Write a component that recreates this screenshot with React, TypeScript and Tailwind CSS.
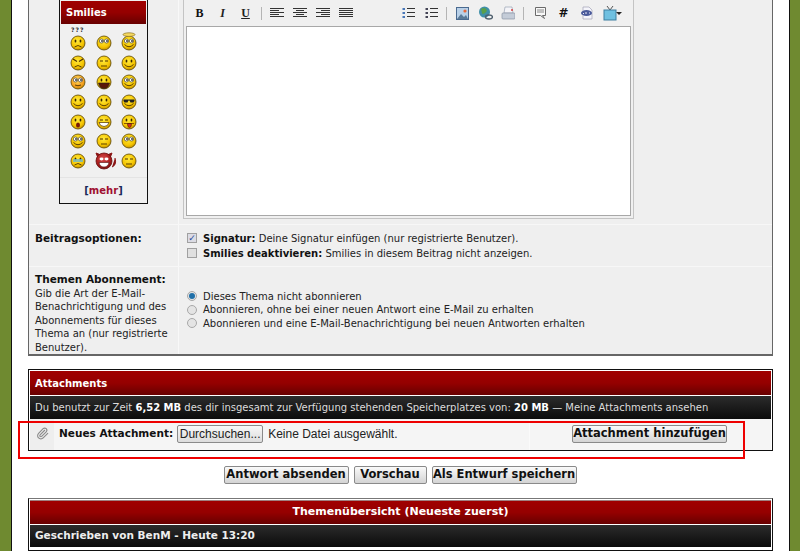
import React from "react";
import { Paperclip } from "lucide-react";

type Mood = "smile" | "sad" | "angry" | "flat" | "wink" | "open" | "laugh" | "shades" | "tongue" | "teeth" | "blush" | "huh" | "halo" | "cry" | "cool" | "devil";

function Smiley({ mood, id }: { mood: Mood; id: string }) {
  const devil = mood === "devil";
  const fillId = `f${id}`;
  return (
    <svg width="26" height="20" viewBox="0 0 26 20" className="overflow-visible">
      <defs>
        <radialGradient id={fillId} cx="45%" cy="35%" r="70%">
          <stop offset="0%" stopColor={devil ? "#d84a4a" : mood === "blush" ? "#ffe060" : "#ffe93a"} />
          <stop offset="65%" stopColor={devil ? "#a81c1c" : mood === "blush" ? "#f8a020" : "#f5c400"} />
          <stop offset="100%" stopColor={devil ? "#701010" : "#b58400"} />
        </radialGradient>
      </defs>
      {devil && <path d="M5 3 L7 8 L10 5Z M21 3 L19 8 L16 5Z M21 17 Q26 15 24 8" fill="#8a1414" stroke="#8a1414" />}
      <circle cx="13" cy="11" r={devil ? 8 : 7} fill={`url(#${fillId})`} stroke={devil ? "#6a1010" : "#5a4400"} strokeWidth="0.8" />
      {mood === "halo" && <ellipse cx="13" cy="2.6" rx="6" ry="1.8" fill="#f5d860" stroke="#8a7020" strokeWidth="0.7" />}
      {mood === "shades" ? (
        <path d="M7.5 8.5h11v1.5l-1 1.5h-3l-1-2h-1l-1 2h-3l-1-1.5z" fill="#222" />
      ) : mood === "huh" || mood === "cool" || mood === "halo" || mood === "blush" ? (
        <g fill="#fff" stroke="#333" strokeWidth="0.6">
          <ellipse cx="10.5" cy="9" rx="2.2" ry="2" />
          <ellipse cx="15.5" cy="9" rx="2.2" ry="2" />
          <circle cx="11" cy="9" r="0.7" fill="#222" />
          <circle cx="16" cy="9" r="0.7" fill="#222" />
        </g>
      ) : mood === "angry" ? (
        <path d="M8 7l4 2.5M18 7l-4 2.5" stroke="#4a3000" strokeWidth="1.2" />
      ) : mood === "teeth" || mood === "flat" ? (
        <path d="M9 9h3M14 9h3" stroke="#4a3000" strokeWidth="1.1" />
      ) : devil ? (
        <g fill="#fff"><ellipse cx="10.5" cy="9" rx="2" ry="1.4" /><ellipse cx="15.5" cy="9" rx="2" ry="1.4" /></g>
      ) : (
        <g fill="#3a2800"><ellipse cx="10.5" cy="9" rx="0.9" ry="1.5" /><ellipse cx="15.5" cy="9" rx="0.9" ry="1.5" /></g>
      )}
      {(mood === "smile" || mood === "shades" || mood === "huh" || mood === "wink" || mood === "halo") && <path d="M8.5 12.5Q13 17 17.5 12.5" fill="none" stroke="#4a3000" strokeWidth="0.9" />}
      {(mood === "sad" || mood === "angry" || mood === "cry") && <path d="M9.5 15Q13 12 16.5 15" fill="none" stroke="#4a3000" strokeWidth="0.9" />}
      {mood === "flat" && <path d="M10 14h6" stroke="#4a3000" strokeWidth="0.9" />}
      {mood === "blush" && <path d="M10 14q3 1.5 6 0" fill="none" stroke="#4a3000" strokeWidth="0.9" />}
      {mood === "open" && <ellipse cx="13" cy="14" rx="2" ry="2.6" fill="#7a1808" />}
      {mood === "laugh" && <path d="M7.5 12h11q-1 5.5-5.5 5.5T7.5 12z" fill="#5a1808" stroke="#222" strokeWidth="0.6" />}
      {mood === "teeth" && <path d="M8 11.5h10q-1 4-5 4t-5-4z" fill="#fff" stroke="#4a3000" strokeWidth="0.7" />}
      {mood === "tongue" && <path d="M8 12.5h10M11.5 12.5h4q0 4-2 4t-2-4z" fill="#d83020" stroke="#5a2000" strokeWidth="0.7" />}
      {devil && <path d="M8 12.5h10q-1 4.5-5 4.5t-5-4.5z" fill="#fff" stroke="#501010" strokeWidth="0.6" />}
      {mood === "cry" && <path d="M8 9h10v3H8z" fill="#70b8c8" opacity="0.8" />}
    </svg>
  );
}

function AlignIcon({ lines }: { lines: [number, number][] }) {
  return (
    <svg width="14" height="11" viewBox="0 0 14 11">
      {lines.map(([a, b], i) => (
        <rect key={i} x={a} y={i * 2 + (i > 2 ? 0 : 0)} width={b - a} height="1" fill="#333" />
      ))}
    </svg>
  );
}

function ListIcon({ numbered }: { numbered?: boolean }) {
  return (
    <svg width="13" height="12" viewBox="0 0 13 12">
      {[1, 5, 9].map((y) => (
        <g key={y}>
          <rect x="0.5" y={y} width="2.5" height="2" fill={numbered ? "#4a78b8" : "#445"} />
          <rect x="5" y={y} width="8" height="1" fill="#333" />
        </g>
      ))}
    </svg>
  );
}

function Btn({ children, className = "" }: { children: React.ReactNode; className?: string }) {
  return <span className={`flex w-[23px] h-[20px] items-center justify-center shrink-0 ${className}`}>{children}</span>;
}

const Sep = () => <span className="w-px h-[13px] bg-[#b4b4b4] shrink-0" />;

function Radio({ on }: { on?: boolean }) {
  return (
    <span className="w-[10px] h-[10px] rounded-full border border-[#a8a8a8] bg-[#e4e4e4] shrink-0 flex items-center justify-center">
      {on && <span className="w-[6px] h-[6px] rounded-full bg-[#1f6fa8]" />}
    </span>
  );
}

function PillButton({ children, className = "" }: { children: React.ReactNode; className?: string }) {
  return (
    <span className={`flex h-[18px] items-center justify-center rounded-[2px] border border-[#8a8a8a] bg-gradient-to-b from-[#fafafa] to-[#d4d4d4] text-[11.5px] font-bold text-[#111] ${className}`}>
      {children}
    </span>
  );
}

const RED = "bg-gradient-to-b from-[#a00000] via-[#950000] to-[#680000]";
const DARK = "bg-gradient-to-b from-[#2c2c2c] to-[#0c0c0c]";

const moods: Mood[] = [
  "sad", "cool", "halo",
  "angry", "flat", "wink",
  "blush", "laugh", "huh",
  "smile", "wink", "shades",
  "open", "teeth", "tongue",
  "huh", "flat", "cool",
  "cry", "devil", "flat",
];

export default function App() {
  return (
    <div className="relative flex h-[551px] w-[800px] overflow-hidden bg-[#6f8a30] font-['DejaVu_Sans',Verdana,sans-serif] text-[10px] text-[#222]">
      <div className="ml-[11px] flex h-full w-[779px] flex-col border-x border-x-[#111] bg-white px-[16px]">
        {/* Reply form */}
        <div className="flex h-[356px] shrink-0 flex-col border-x border-b-2 border-x-[#666] border-b-[#666] bg-[#efefef]">
          <div className="flex h-[224px] shrink-0">
            <div className="w-[150px] shrink-0 border-r border-[#f8f8f8] pl-[30px]">
              <div className="flex h-[204px] w-[89px] flex-col border border-t-0 border-[#111] bg-[#f0f0f0]">
                <div className={`mx-px mt-px flex h-[23px] shrink-0 items-center pl-[5px] text-[10px] font-bold text-white ${RED}`}>Smilies</div>
                <div className="grid grid-cols-3 px-[5px] pt-[8px]">
                  {moods.map((m, i) => (
                    <div key={i} className="relative flex h-[19.7px] items-center justify-center">
                      {i === 0 && <span className="absolute -top-[5px] text-[6px] font-bold leading-none tracking-[1px] text-[#333]">???</span>}
                      <Smiley mood={m} id={String(i)} />
                    </div>
                  ))}
                </div>
                <div className="mt-auto flex h-[26px] items-center justify-center border-t border-[#e4e4e4] text-[10px] font-bold text-[#1a2a5a]">
                  [<span className="text-[#a01030]">mehr</span>]
                </div>
              </div>
            </div>
            <div className="pl-[4px]">
              <div className="flex h-[219px] w-[451px] flex-col border-x border-b border-[#c4c4c4] bg-[#f0f0f0] px-[2px]">
                <div className="flex h-[26px] shrink-0 items-center pl-[2px]">
                  <Btn><span className="font-['Liberation_Serif',serif] text-[12px] font-bold text-[#111]">B</span></Btn>
                  <Btn><span className="font-['Liberation_Serif',serif] text-[12px] font-bold italic text-[#222]">I</span></Btn>
                  <Btn><span className="font-['Liberation_Serif',serif] text-[12px] font-bold underline text-[#222]">U</span></Btn>
                  <span className="w-[3.5px] shrink-0" />
                  <Sep />
                  <Btn className="ml-[4px]"><AlignIcon lines={[[0, 14], [0, 9], [0, 14], [0, 9], [0, 14]]} /></Btn>
                  <Btn><AlignIcon lines={[[0, 14], [3, 11], [0, 14], [3, 11], [0, 14]]} /></Btn>
                  <Btn><AlignIcon lines={[[0, 14], [5, 14], [0, 14], [5, 14], [0, 14]]} /></Btn>
                  <Btn><AlignIcon lines={[[0, 14], [0, 14], [0, 14], [0, 14], [0, 14]]} /></Btn>
                  <span className="w-[39px] shrink-0" />
                  <Btn><ListIcon numbered /></Btn>
                  <Btn><ListIcon /></Btn>
                  <span className="w-[3.5px] shrink-0" />
                  <Sep />
                  <span className="w-[3.5px] shrink-0" />
                  <Btn>
                    <svg width="13" height="13" viewBox="0 0 13 13"><rect x="0.5" y="0.5" width="12" height="12" fill="#b8d0e8" stroke="#4a6a90" /><path d="M1 12l4-5 3 3 2-2 2 4z" fill="#5a7a98" /><circle cx="9" cy="4" r="1.6" fill="#e8683a" /></svg>
                  </Btn>
                  <Btn>
                    <svg width="15" height="14" viewBox="0 0 15 14"><circle cx="6.5" cy="6" r="5.5" fill="#3f8fa8" /><path d="M3 3q3-2 5 0t-1 4-3 0z" fill="#5aa04a" /><ellipse cx="11" cy="11" rx="3.5" ry="2" fill="none" stroke="#50606e" strokeWidth="1.4" /></svg>
                  </Btn>
                  <Btn>
                    <svg width="14" height="14" viewBox="0 0 14 14"><path d="M4 1h7l1 6H3z" fill="#f4f4f8" stroke="#9aa4b4" strokeWidth="0.7" /><rect x="1" y="7" width="13" height="6" rx="1" fill="#c4ccd8" stroke="#8a94a4" strokeWidth="0.7" /><circle cx="11" cy="4" r="1" fill="#d84040" /></svg>
                  </Btn>
                  <span className="w-[3.5px] shrink-0" />
                  <Sep />
                  <span className="w-[5px] shrink-0" />
                  <Btn>
                    <svg width="13" height="14" viewBox="0 0 13 14"><path d="M1.5 1.5h10v8h-3l2 3-4-3h-5z" fill="#f8f8f8" stroke="#6a6a6a" /><path d="M3 4h7M3 6h7" stroke="#888" /></svg>
                  </Btn>
                  <Btn><span className="text-[12px] font-bold text-[#111]">#</span></Btn>
                  <Btn>
                    <svg width="14" height="14" viewBox="0 0 14 14"><path d="M3 1h6l3 3v9H3z" fill="#f4f4fa" stroke="#a0a0b4" strokeWidth="0.7" /><ellipse cx="6.5" cy="7" rx="5.5" ry="3" fill="#4a5a9a" /><path d="M3 7.5h1M6 6v2M9 7h1" stroke="#e8e8f8" /></svg>
                  </Btn>
                  <Btn>
                    <svg width="14" height="16" viewBox="0 0 14 16"><path d="M4 1l3 4 3-4" fill="none" stroke="#555" /><rect x="1" y="5" width="12" height="10" fill="#6fc0e0" stroke="#3f7f9f" /></svg>
                  </Btn>
                  <span className="-ml-[5px] h-0 w-0 border-x-[3px] border-t-[3px] border-x-transparent border-t-[#222]" />
                </div>
                <div className="h-[190px] shrink-0 border border-[#a8a8a8] bg-white" />
              </div>
            </div>
          </div>
          <div className="flex h-[42px] shrink-0 border-t border-[#f7f7f7]">
            <div className="w-[150px] shrink-0 border-r border-[#f8f8f8] pl-[6px] pt-[6px] text-[10.5px] font-bold text-[#111]">Beitragsoptionen:</div>
            <div className="flex flex-col gap-[3px] pl-[8px] pt-[7px]">
              <div className="flex h-[12px] items-center gap-[6px]">
                <span className="flex h-[10px] w-[10px] items-center justify-center border border-[#a0a0a0] bg-[#dcdce4] text-[9px] font-bold leading-none text-[#2a4a9a]">✓</span>
                <span><b className="text-[#111]">Signatur:</b> Deine Signatur einfügen (nur registrierte Benutzer).</span>
              </div>
              <div className="flex h-[12px] items-center gap-[6px]">
                <span className="h-[10px] w-[10px] border border-[#a0a0a0] bg-[#e0e0e0]" />
                <span><b className="text-[#111]">Smilies deaktivieren:</b> Smilies in diesem Beitrag nicht anzeigen.</span>
              </div>
            </div>
          </div>
          <div className="flex min-h-0 flex-1 border-t border-[#f7f7f7]">
            <div className="w-[150px] shrink-0 border-r border-[#f8f8f8] pl-[6px] pt-[6px] leading-[13.5px]">
              <div className="text-[10.5px] font-bold text-[#111]">Themen Abonnement:</div>
              Gib die Art der E-Mail-<br />Benachrichtigung und des<br />Abonnements für dieses<br />Thema an (nur registrierte<br />Benutzer).
            </div>
            <div className="flex flex-col gap-[1.5px] pl-[8px] pt-[23px]">
              {["Dieses Thema nicht abonnieren", "Abonnieren, ohne bei einer neuen Antwort eine E-Mail zu erhalten", "Abonnieren und eine E-Mail-Benachrichtigung bei neuen Antworten erhalten"].map((t, i) => (
                <div key={i} className="flex h-[12px] items-center gap-[6px]">
                  <Radio on={i === 0} />
                  <span>{t}</span>
                </div>
              ))}
            </div>
          </div>
        </div>

        {/* Attachments */}
        <div className="mt-[13px] flex h-[82px] shrink-0 flex-col border border-[#111] bg-white p-px pb-0">
          <div className={`flex h-[24px] shrink-0 items-center pl-[5px] text-[10px] font-bold text-white ${RED}`}>Attachments</div>
          <div className={`mt-px flex h-[23px] shrink-0 items-center pl-[5px] text-[#ddd] ${DARK}`}>
            <span>Du benutzt zur Zeit <b className="text-white">6,52 MB</b> des dir insgesamt zur Verfügung stehenden Speicherplatzes von: <b className="text-white">20 MB</b> — Meine Attachments ansehen</span>
          </div>
          <div className="flex min-h-0 flex-1 items-center bg-[#f5f5f5]">
            <span className="flex h-full w-[24px] shrink-0 items-center justify-center bg-[#eeeeee] pb-[2px]"><Paperclip size={13} color="#8a8a8a" strokeWidth={2} className="ml-[1px] -rotate-[0deg]" /></span>
            <div className="flex h-full w-[476px] shrink-0 items-center border-r border-[#fafafa] pb-[1px]">
              <b className="ml-[5px] text-[10.5px] text-[#111]">Neues Attachment:</b>
              <span className="ml-[4px] flex h-[18px] w-[86px] items-center justify-center rounded-[2px] border border-[#8a8a8a] bg-gradient-to-b from-[#f8f8f8] to-[#dcdcdc] font-['Liberation_Sans',sans-serif] text-[12px] text-[#222]">Durchsuchen...</span>
              <span className="ml-[5px] font-['Liberation_Sans',sans-serif] text-[12px] text-[#222]">Keine Datei ausgewählt.</span>
            </div>
            <PillButton className="ml-[42px] mb-[1px] w-[155px]">Attachment hinzufügen</PillButton>
          </div>
        </div>

        <div className="mt-[15px] flex shrink-0 justify-center gap-[5px] pr-[1px]">
          <PillButton className="w-[125px]">Antwort absenden</PillButton>
          <PillButton className="w-[73px]">Vorschau</PillButton>
          <PillButton className="w-[145px]">Als Entwurf speichern</PillButton>
        </div>

        {/* Thread review */}
        <div className="mt-[14px] flex flex-1 flex-col border border-[#111] border-t-[#777] bg-white p-px pb-0">
          <div className={`flex h-[24px] shrink-0 items-center justify-center border-t border-[#a08080] text-[11px] font-bold text-white ${RED}`}>Themenübersicht (Neueste zuerst)</div>
          <div className={`mt-px flex h-[22px] shrink-0 items-center pl-[5px] text-[10.5px] font-bold text-[#eee] ${DARK}`}>Geschrieben von BenM - Heute 13:20</div>
        </div>
      </div>

      {/* Red annotation drawn over the page */}
      <div className="absolute left-[18px] top-[421px] h-[38px] w-[727px] border-[2px] border-[#ee0000]" />
    </div>
  );
}
